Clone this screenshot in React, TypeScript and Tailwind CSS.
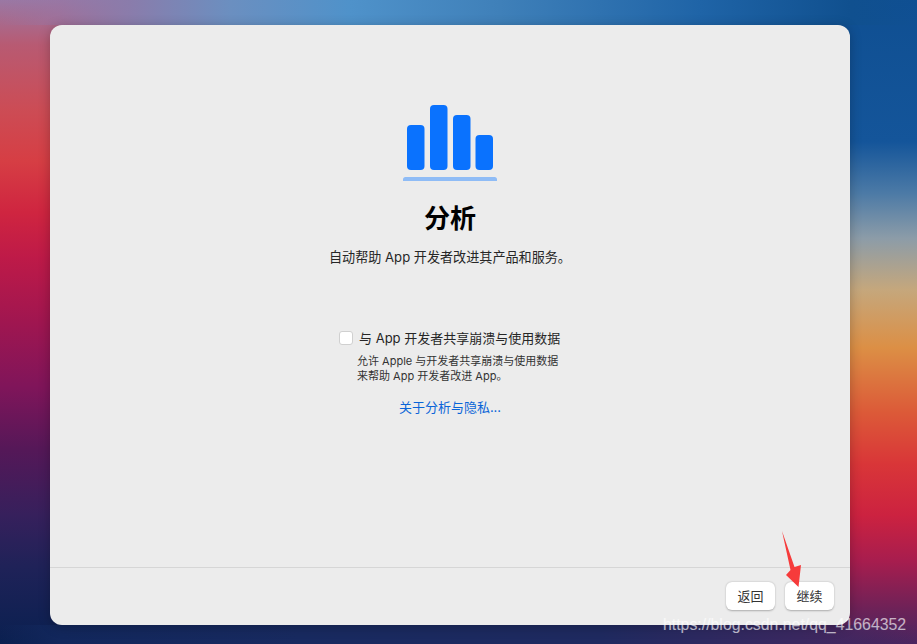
const fontStack = "font-['Inter','Noto_Sans_CJK_SC',sans-serif]";

function BarsIcon() {
  return (
    <svg width="94" height="76" viewBox="0 0 94 76" className="block">
      <rect x="4" y="20" width="17.5" height="45" rx="4" fill="#0a72fe" />
      <rect x="27" y="0" width="17.5" height="65" rx="4" fill="#0a72fe" />
      <rect x="50" y="10" width="17.5" height="55" rx="4" fill="#0a72fe" />
      <rect x="72.5" y="30" width="17.5" height="35" rx="4" fill="#0a72fe" />
      <path d="M0 76v-1.5A2.5 2.5 0 0 1 2.5 72h89a2.5 2.5 0 0 1 2.5 2.5V76z" fill="#8fbcf6" />
    </svg>
  );
}

function FooterButton({ label }: { label: string }) {
  return (
    <button className="h-[28px] w-[49px] rounded-[6px] bg-white text-[13px] leading-[28px] text-[#333] shadow-[0_0.5px_2px_rgba(0,0,0,0.28)]">
      {label}
    </button>
  );
}

export default function App() {
  return (
    <div
      className={`relative h-[644px] w-[917px] overflow-hidden p-[25px_67px_19px_50px] ${fontStack} bg-no-repeat [background-size:100%_25px,100%_19px,50%_100%,50%_100%] [background-position:top_left,bottom_left,left_top,right_top] [background-image:linear-gradient(to_right,rgba(150,118,165,0)_0px,rgba(150,118,165,0.5)_60px,#8a7cab_130px,#6b8fc0_230px,#4f92ca_350px,#3f80b9_500px,#1f64a7_700px,#10508f_850px,rgba(16,80,143,0)_917px),linear-gradient(to_right,rgba(10,32,80,0)_0px,#12275c_60px,#182a60_300px,#1f2a60_600px,#3a2860_800px,rgba(74,37,96,0)_917px),linear-gradient(to_bottom,#9a78a4_0%,#b85a72_7%,#cc4c55_17%,#d63e44_25%,#cf2540_33%,#be1a48_40%,#a01650_50%,#80155a_60%,#541858_70%,#36205c_80%,#1f2258_88%,#0a2050_100%),linear-gradient(to_bottom,#0f4f92_0%,#14559a_22%,#4c7aa6_30%,#8c9ca8_37%,#c5a77c_45%,#dc8f45_54%,#dc5a38_64%,#d93638_72%,#cc2240_80%,#a81d4e_87%,#6a2258_95%,#4a2560_100%)]`}
    >
      <div className="flex h-[600px] w-[800px] flex-col rounded-[12px] bg-[#ececec] shadow-[0_2px_12px_rgba(0,0,0,0.25)]">
        <div className="flex flex-1 flex-col items-center pt-[80px]">
          <BarsIcon />
          <h1 className="mt-[19px] text-[26px] font-bold leading-[38px] text-black">分析</h1>
          <p className="mt-[9px] whitespace-nowrap text-[13.1px] leading-[20px] text-[#262626]">
            自动帮助 App 开发者改进其产品和服务。
          </p>

          <div className="mt-[61px] w-[222px]">
            <label className="flex items-center gap-[6px] whitespace-nowrap text-[13px] leading-[20px] text-[#262626]">
              <span className="h-[14px] w-[14px] shrink-0 rounded-[3px] border border-[#d0d0d0] bg-white" />
              与 App 开发者共享崩溃与使用数据
            </label>
            <p className="mt-[6px] ml-[18px] whitespace-nowrap text-[11px] leading-[15px] text-[#333]">
              允许 Apple 与开发者共享崩溃与使用数据
              <br />
              来帮助 App 开发者改进 App。
            </p>
          </div>
          <a className="mt-[13px] text-[13px] leading-[20px] text-[#0a65d8]">关于分析与隐私...</a>
        </div>
        <div className="flex h-[58px] items-start justify-end gap-[10px] border-t border-[#d6d6d6] pt-[14px] pr-[16px]">
          <FooterButton label="返回" />
          <FooterButton label="继续" />
        </div>
      </div>

      {/* annotation arrow */}
      <svg width="30" height="60" viewBox="0 0 30 60" className="absolute left-[778px] top-[529px]">
        <polygon points="4,2 16.5,38 23,36 20.5,58 8,46 12.5,41" fill="#f63b3b" />
      </svg>
      {/* watermark */}
      <span className="absolute left-[663px] top-[615px] font-['Liberation_Sans',sans-serif] text-[15.85px] leading-[20px] text-white/65">
        https://blog.csdn.net/qq_41664352
      </span>
    </div>
  );
}
